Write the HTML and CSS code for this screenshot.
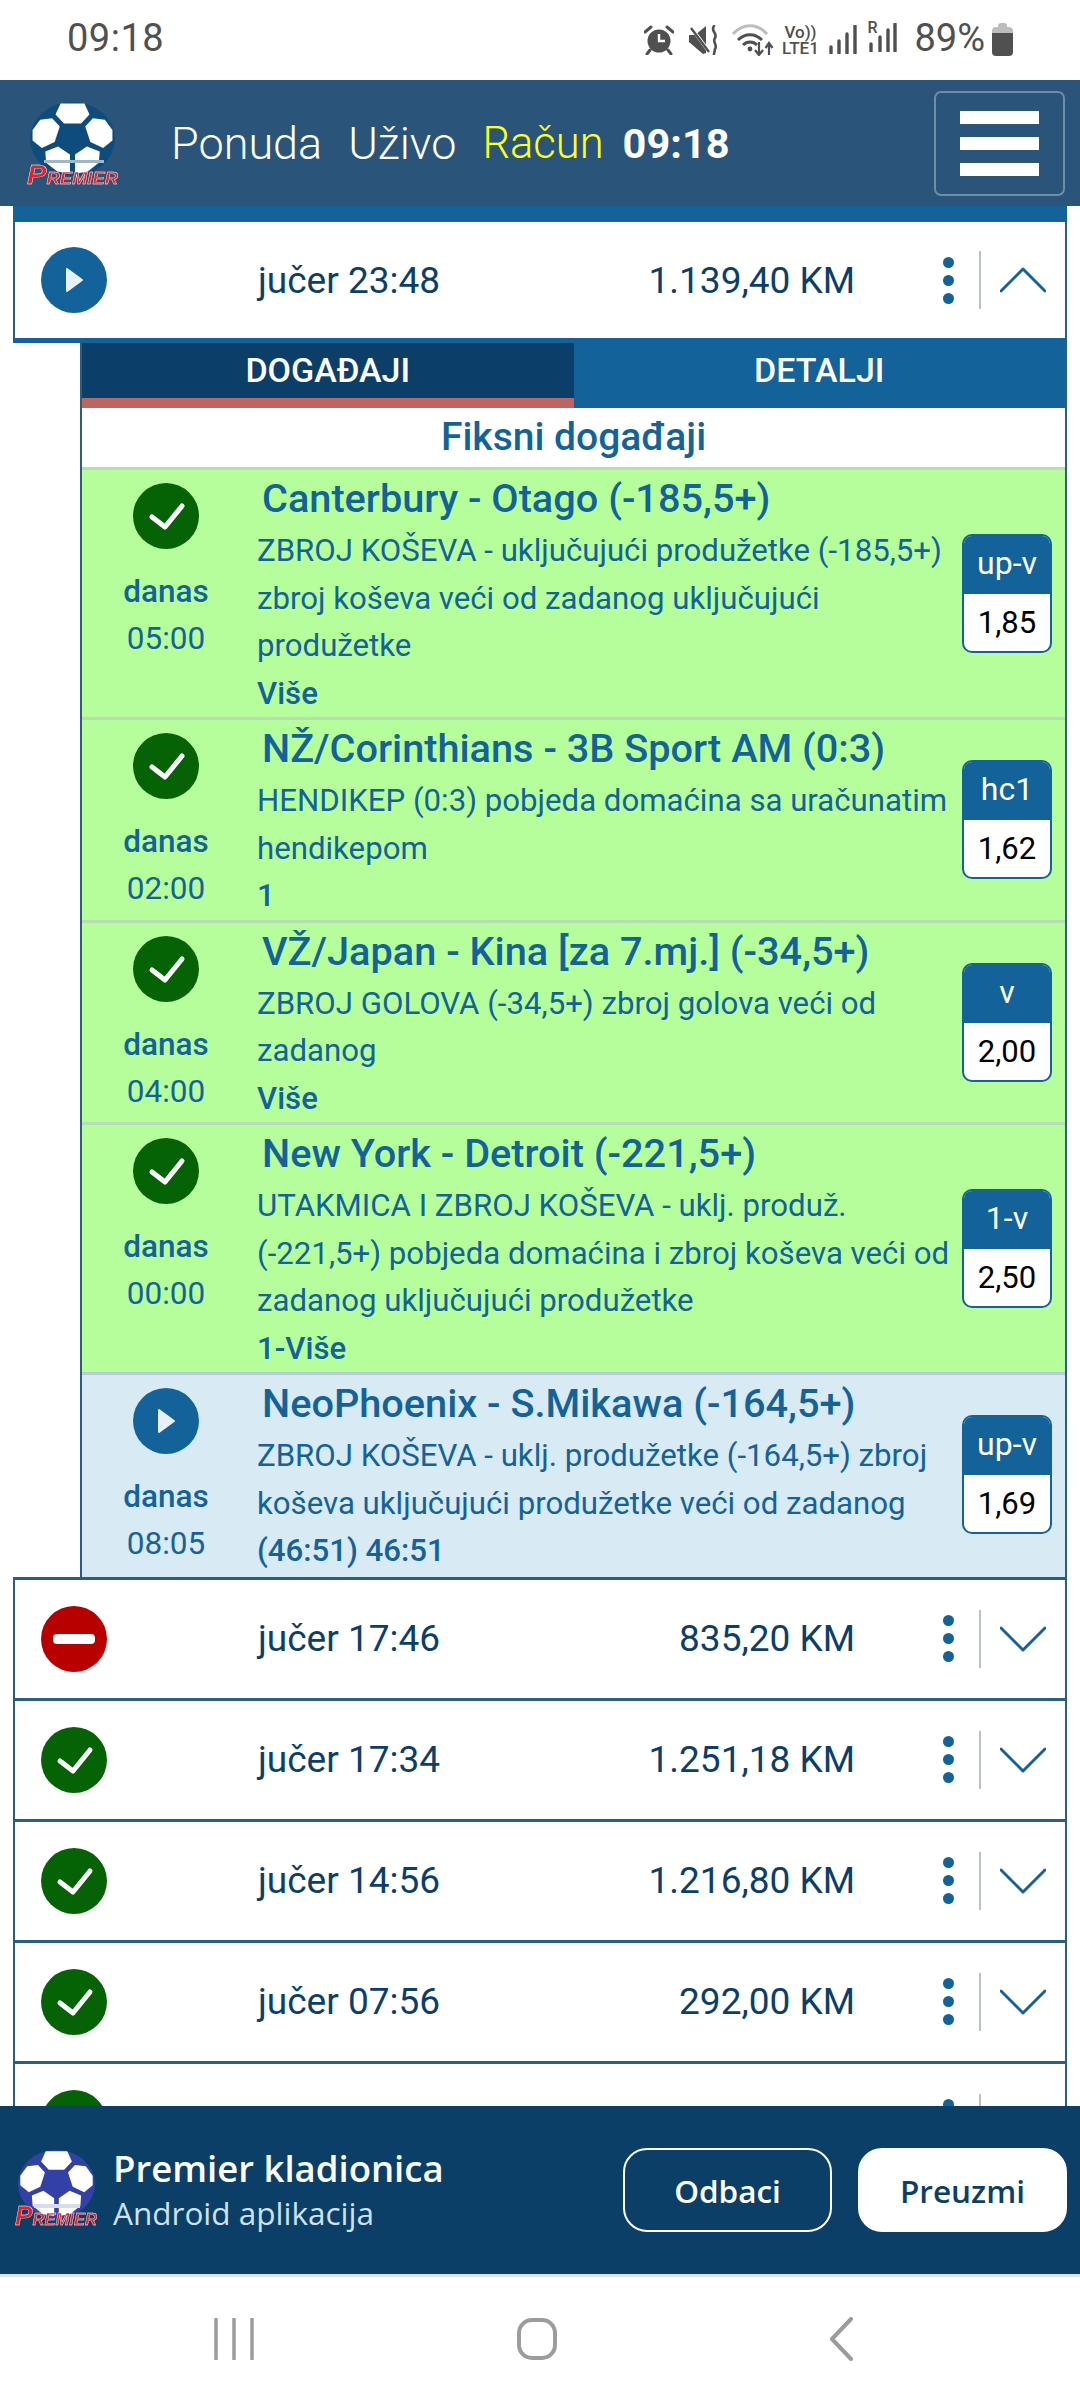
FILE: index.html
```html
<!DOCTYPE html>
<html lang="hr">
<head>
    <meta charset="UTF-8" />
    <meta name="viewport" content="width=device-width, initial-scale=1.0" />
    <title>Premier</title>
    <link rel="stylesheet" href="styles.css">
</head>

<body>
    <svg class="defs" width="0" height="0">
        <symbol id="ball" viewBox="0 0 100 100" preserveAspectRatio="none">
            <circle cx="50" cy="50" r="50" fill="currentColor" />
            <g fill="#fff">
                <polygon points="36,2 64,2 70,17 60,29 40,29 30,17" />
                <polygon points="26,22 35,33 29,54 14,62 3,52 3,38 12,24" />
                <polygon points="74,22 65,33 71,54 86,62 97,52 97,38 88,24" />
                <polygon points="33,60 47,71 47,97 32,94 19,82 18,67" />
                <polygon points="67,60 53,71 53,97 68,94 81,82 82,67" />
            </g>
        </symbol>
        <symbol id="check" viewBox="0 0 66 66">
            <circle cx="33" cy="33" r="33" fill="#056205" />
            <path d="M19 34 L32 44 L49 23" fill="none" stroke="#fff" stroke-width="5" stroke-linecap="round" stroke-linejoin="round" />
        </symbol>
        <symbol id="play" viewBox="0 0 66 66">
            <circle cx="33" cy="33" r="33" fill="#13629a" />
            <path d="M26 22 L41 33 L26 44 Z" fill="#e8f1f7" stroke="#e8f1f7" stroke-width="2" stroke-linejoin="round" />
        </symbol>
        <symbol id="stop" viewBox="0 0 66 66">
            <circle cx="33" cy="33" r="33" fill="#b90000" />
            <rect x="12" y="28" width="42" height="10" rx="4" fill="#fff" />
        </symbol>
        <symbol id="up" viewBox="0 0 46 26">
            <path d="M1 24 L23 2 L45 24" fill="none" stroke="#13629a" stroke-width="3" stroke-linecap="round" stroke-linejoin="round" />
        </symbol>
        <symbol id="down" viewBox="0 0 46 26">
            <path d="M1 2 L23 24 L45 2" fill="none" stroke="#13629a" stroke-width="3" stroke-linecap="round" stroke-linejoin="round" />
        </symbol>
    </svg>

    <div class="status-bar">
        <span class="status-time">09:18</span>
        <div class="status-icons">
            <svg class="st-alarm" width="30" height="30" viewBox="0 0 30 30">
                <circle cx="15" cy="16" r="11.5" fill="#505050" />
                <path d="M15 9 V16 H21" fill="none" stroke="#fff" stroke-width="2.4" />
                <path d="M1 7 L7 2 M29 7 L23 2 M6 25 L3 29 M24 25 L27 29" stroke="#505050" stroke-width="3" stroke-linecap="round" />
            </svg>
            <svg class="st-mute" width="31" height="30" viewBox="0 0 31 30">
                <path d="M0 10 H6 L17 1 V28 L14 29 L0 17 Z" fill="#505050" />
                <path d="M1 1 L21 28" stroke="#fff" stroke-width="3.5" />
                <path d="M2 3 L20 27" stroke="#505050" stroke-width="2.4" />
                <path d="M25 1 C21 6 29 8 26 13 C23 17 29 20 26 24 L25 29" fill="none" stroke="#505050" stroke-width="2.6" stroke-linecap="round" />
            </svg>
            <svg class="st-wifi" width="42" height="32" viewBox="0 0 42 32">
                <path d="M1 10 C11 -1 25 -1 35 10" fill="none" stroke="#bdbdbd" stroke-width="3" />
                <path d="M6 16 C13 9 23 9 30 16 M11 21 C15 17 21 17 25 21" fill="none" stroke="#505050" stroke-width="3" />
                <circle cx="18" cy="25" r="2.4" fill="#505050" />
                <path d="M27 18 V30 M23 26 L27 31 L31 26 M37 31 V20 M33.500 24 L37 19 L40.500 24" fill="none" stroke="#505050" stroke-width="2.2" />
            </svg>
            <div class="st-lte"><span>Vo))</span><span>LTE1</span></div>
            <svg class="st-signal" width="28" height="29" viewBox="0 0 28 29">
                <path d="M2 22 V28 M10 16 V28 M18 9 V28 M26 1 V28" stroke="#505050" stroke-width="3.4" stroke-linecap="round" />
            </svg>
            <div class="st-roam">
                <span class="st-r">R</span>
                <svg width="30" height="29" viewBox="0 0 30 29">
                    <path d="M4 21 V28 M13 14 V28 M21 7 V28 M28 1 V28" stroke="#505050" stroke-width="3.400" stroke-linecap="round" />
                </svg>
            </div>
            <span class="st-percent">89%</span>
            <svg class="st-battery" width="21" height="33" viewBox="0 0 21 33">
                <path d="M6 3 Q6 0 9 0 H12 Q15 0 15 3 V4 H17 Q21 4 21 8 V10 H0 V8 Q0 4 4 4 H6 Z" fill="#bdbdbd" />
                <path d="M0 10 H21 V29 Q21 33 17 33 H4 Q0 33 0 29 Z" fill="#505050" />
            </svg>
        </div>
    </div>

    <header class="top-bar">
        <svg class="logo logo-top" width="98" height="90" viewBox="0 0 98 90">
            <use href="#ball" x="6" y="4" width="85" height="74" />
            <rect x="20" y="62" width="60" height="3" fill="#9db7cc" />
            <text class="logo-text" x="3" y="86" textLength="91" lengthAdjust="spacingAndGlyphs"><tspan class="logo-big">P</tspan>REMIER</text>
        </svg>
        <nav class="top-nav">
            <a>Ponuda</a>
            <a>Uživo</a>
            <a class="active">Račun</a>
            <b>09:18</b>
        </nav>
        <div class="menu-button">
            <span></span><span></span><span></span>
        </div>
    </header>

    <main>
        <div class="ticket-strip"></div>

        <div class="ticket open">
            <svg class="state-icon"><use href="#play" /></svg>
            <span class="ticket-time">jučer 23:48</span>
            <span class="ticket-sum">1.139,40 KM</span>
            <div class="dots"><i></i><i></i><i></i></div>
            <div class="divider"></div>
            <svg class="chevron"><use href="#up" /></svg>
        </div>

        <section class="details">
            <div class="tabs">
                <div class="tab active">DOGAĐAJI</div>
                <div class="tab">DETALJI</div>
            </div>
            <h2 class="fixed-title">Fiksni događaji</h2>

            <div class="event won">
                <div class="event-when">
                    <svg class="state-icon"><use href="#check" /></svg>
                    <span class="when-day">danas</span>
                    <span>05:00</span>
                </div>
                <div class="event-body">
                    <h3>Canterbury - Otago (-185,5+)</h3>
                    <p>ZBROJ KOŠEVA - uključujući produžetke (-185,5+) zbroj koševa veći od zadanog uključujući produžetke</p>
                    <strong>Više</strong>
                </div>
                <div class="odds"><span>up-v</span><b>1,85</b></div>
            </div>

            <div class="event won">
                <div class="event-when">
                    <svg class="state-icon"><use href="#check" /></svg>
                    <span class="when-day">danas</span>
                    <span>02:00</span>
                </div>
                <div class="event-body">
                    <h3>NŽ/Corinthians - 3B Sport AM (0:3)</h3>
                    <p>HENDIKEP (0:3) pobjeda domaćina sa uračunatim hendikepom</p>
                    <strong>1</strong>
                </div>
                <div class="odds"><span>hc1</span><b>1,62</b></div>
            </div>

            <div class="event won">
                <div class="event-when">
                    <svg class="state-icon"><use href="#check" /></svg>
                    <span class="when-day">danas</span>
                    <span>04:00</span>
                </div>
                <div class="event-body">
                    <h3>VŽ/Japan - Kina [za 7.mj.] (-34,5+)</h3>
                    <p>ZBROJ GOLOVA (-34,5+) zbroj golova veći od zadanog</p>
                    <strong>Više</strong>
                </div>
                <div class="odds"><span>v</span><b>2,00</b></div>
            </div>

            <div class="event won">
                <div class="event-when">
                    <svg class="state-icon"><use href="#check" /></svg>
                    <span class="when-day">danas</span>
                    <span>00:00</span>
                </div>
                <div class="event-body">
                    <h3>New York - Detroit (-221,5+)</h3>
                    <p>UTAKMICA I ZBROJ KOŠEVA - uklj. produž. (-221,5+) pobjeda domaćina i zbroj koševa veći od zadanog uključujući produžetke</p>
                    <strong>1-Više</strong>
                </div>
                <div class="odds"><span>1-v</span><b>2,50</b></div>
            </div>

            <div class="event live">
                <div class="event-when">
                    <svg class="state-icon"><use href="#play" /></svg>
                    <span class="when-day">danas</span>
                    <span>08:05</span>
                </div>
                <div class="event-body">
                    <h3>NeoPhoenix - S.Mikawa (-164,5+)</h3>
                    <p>ZBROJ KOŠEVA - uklj. produžetke (-164,5+) zbroj koševa uključujući produžetke veći od zadanog</p>
                    <strong>(46:51) 46:51</strong>
                </div>
                <div class="odds"><span>up-v</span><b>1,69</b></div>
            </div>
        </section>

        <div class="ticket">
            <svg class="state-icon"><use href="#stop" /></svg>
            <span class="ticket-time">jučer 17:46</span>
            <span class="ticket-sum">835,20 KM</span>
            <div class="dots"><i></i><i></i><i></i></div>
            <div class="divider"></div>
            <svg class="chevron"><use href="#down" /></svg>
        </div>
        <div class="ticket">
            <svg class="state-icon"><use href="#check" /></svg>
            <span class="ticket-time">jučer 17:34</span>
            <span class="ticket-sum">1.251,18 KM</span>
            <div class="dots"><i></i><i></i><i></i></div>
            <div class="divider"></div>
            <svg class="chevron"><use href="#down" /></svg>
        </div>
        <div class="ticket">
            <svg class="state-icon"><use href="#check" /></svg>
            <span class="ticket-time">jučer 14:56</span>
            <span class="ticket-sum">1.216,80 KM</span>
            <div class="dots"><i></i><i></i><i></i></div>
            <div class="divider"></div>
            <svg class="chevron"><use href="#down" /></svg>
        </div>
        <div class="ticket">
            <svg class="state-icon"><use href="#check" /></svg>
            <span class="ticket-time">jučer 07:56</span>
            <span class="ticket-sum">292,00 KM</span>
            <div class="dots"><i></i><i></i><i></i></div>
            <div class="divider"></div>
            <svg class="chevron"><use href="#down" /></svg>
        </div>
        <div class="ticket">
            <svg class="state-icon"><use href="#check" /></svg>
            <span class="ticket-time"></span>
            <span class="ticket-sum"></span>
            <div class="dots"><i></i><i></i><i></i></div>
            <div class="divider"></div>
            <svg class="chevron"><use href="#down" /></svg>
        </div>
    </main>

    <div class="app-banner">
        <svg class="logo logo-app" width="88" height="80" viewBox="0 0 88 80">
            <use href="#ball" x="6" y="0" width="77" height="68" />
            <rect x="22" y="54" width="46" height="4" fill="#d7dcec" />
            <text class="logo-text" x="3" y="75" textLength="82" lengthAdjust="spacingAndGlyphs"><tspan class="logo-big">P</tspan>REMIER</text>
        </svg>
        <div class="app-info">
            <strong>Premier kladionica</strong>
            <span>Android aplikacija</span>
        </div>
        <div class="app-buttons">
            <button class="btn-outline">Odbaci</button>
            <button class="btn-solid">Preuzmi</button>
        </div>
    </div>

    <div class="android-nav">
        <svg width="40" height="42" viewBox="0 0 40 42">
            <path d="M2 1 V41 M20 1 V41 M38 1 V41" stroke="#9c9c9c" stroke-width="3.500" stroke-linecap="round" />
        </svg>
        <svg class="nav-home" width="40" height="42" viewBox="0 0 40 42">
            <rect x="2" y="2" width="36" height="38" rx="13" fill="none" stroke="#9c9c9c" stroke-width="4" />
        </svg>
        <svg class="nav-back" width="24" height="44" viewBox="0 0 24 44">
            <path d="M22 2 L3 22 L22 42" fill="none" stroke="#9c9c9c" stroke-width="4" stroke-linecap="round" stroke-linejoin="round" />
        </svg>
    </div>
</body>
</html>
```

FILE: styles.css
```css
body {
    margin: 0;
    width: 1080px;
    height: 2400px;
    overflow: hidden;
    display: flex;
    flex-direction: column;
    background-color: #fff;
    font-family: Roboto, sans-serif;
}

.defs {
    display: none;
}

/* --- status bar --- */
.status-bar {
    height: 80px;
    flex: none;
    display: flex;
    align-items: center;
    justify-content: space-between;
    padding: 0 67px 4px;
    box-sizing: border-box;
    color: #505050;
}

.status-time {
    font-size: 38px;
    font-weight: 400;
    letter-spacing: 0.5px;
}

.status-icons {
    display: flex;
    align-items: center;
    margin-top: 3px;
}

.st-alarm {
    margin-right: 15px;
}

.st-mute {
    margin-right: 12px;
}

.st-wifi {
    margin-right: 6px;
}

.st-lte {
    width: 40px;
    display: flex;
    flex-direction: column;
    align-items: center;
    font-size: 17px;
    font-weight: 500;
    line-height: 16px;
    margin-right: 9px;
}

.st-signal {
    margin-right: 10px;
}

.st-roam {
    position: relative;
    margin-right: 17px;
}

.st-r {
    position: absolute;
    left: 0;
    top: -3px;
    font-size: 16px;
    font-weight: 500;
    line-height: 16px;
}

.st-percent {
    font-size: 38px;
    margin-right: 7px;
    margin-top: -3px;
}

/* --- top bar --- */
.top-bar {
    height: 126px;
    flex: none;
    background-color: #2a5479;
    display: flex;
    align-items: center;
    padding: 0 15px 0 24px;
    box-sizing: border-box;
}

.logo {
    flex: none;
    overflow: visible;
    filter: blur(0.5px);
}

.logo-text {
    font-family: "Liberation Sans", sans-serif;
    font-weight: 700;
    font-style: italic;
    font-size: 17px;
    fill: #e1202c;
    stroke: #fff;
    stroke-width: 0.4px;
}

.logo-big {
    font-size: 27px;
}

.logo-top {
    color: #0f4c7e;
}

.top-nav {
    display: flex;
    align-items: center;
    margin-left: 49px;
    gap: 26px;
    font-size: 45px;
    font-weight: 300;
    color: #fff;
}

.top-nav .active {
    color: #ffff1e;
    font-size: 43.500px;
}

.top-nav b {
    margin-left: -7px;
    font-weight: 700;
    font-size: 41.500px;
}

.menu-button {
    margin-left: auto;
    width: 131px;
    height: 105px;
    box-sizing: border-box;
    border: 2px solid #6f8ca8;
    border-radius: 7px;
    display: flex;
    flex-direction: column;
    align-items: center;
    justify-content: center;
    gap: 13px;
}

.menu-button span {
    width: 79px;
    height: 13px;
    background-color: #fff;
}

/* --- ticket list --- */
main {
    flex: 1;
    min-height: 0;
    overflow: hidden;
    padding: 0 13px;
}

.ticket-strip {
    height: 16px;
    background-color: #13629a;
}

.ticket {
    height: 121px;
    box-sizing: border-box;
    display: flex;
    align-items: center;
    background-color: #fff;
    border: 2px solid #2a5f85;
    border-top: none;
    border-bottom-width: 3px;
    color: #0b3f69;
    font-size: 37px;
    padding-right: 19px;
}

.ticket.open {
    border-bottom-color: #13629a;
    border-bottom-width: 5px;
}

.details + .ticket {
    height: 124px;
    border-top: 3px solid #2a5f85;
}

.state-icon {
    width: 66px;
    height: 66px;
    flex: none;
}

.ticket .state-icon {
    margin-left: 26px;
}

.ticket-time {
    margin-left: 151px;
}

.ticket-sum {
    flex: 1;
    text-align: right;
}

.dots {
    margin-left: 88px;
    width: 12px;
    display: flex;
    flex-direction: column;
    gap: 7px;
}

.dots i {
    width: 11px;
    height: 11px;
    border-radius: 50%;
    background-color: #13629a;
}

.divider {
    width: 2px;
    height: 58px;
    margin-left: 24px;
    background-color: #b8c2cc;
}

.chevron {
    width: 46px;
    height: 26px;
    margin-left: 19px;
    flex: none;
}

/* --- expanded ticket --- */
.details {
    margin-left: 67px;
    border-left: 2px solid #2a5f85;
    border-right: 2px solid #2a5f85;
}

.tabs {
    display: grid;
    grid-template-columns: 1fr 1fr;
}

.tab {
    height: 65px;
    box-sizing: border-box;
    background-color: #13629a;
    color: #fff;
    font-size: 34px;
    font-weight: 500;
    text-align: center;
    line-height: 55px;
}

.tab.active {
    background-color: #0b3f69;
    border-bottom: 10px solid #bf6461;
}

.fixed-title {
    margin: 0;
    height: 59px;
    background-color: #fff;
    color: #13629a;
    font-size: 39px;
    font-weight: 500;
    text-align: center;
    line-height: 58px;
}

.event {
    display: flex;
    align-items: stretch;
    box-sizing: border-box;
    border-top: 3px solid #b9dcb8;
    color: #13629a;
}

.event.won {
    background-color: #b6fe9c;
}

.event.live {
    background-color: #d8eaf4;
    border-top-color: #b8ccd8;
    padding-bottom: 2px;
}

.event-when {
    width: 168px;
    flex: none;
    display: flex;
    flex-direction: column;
    align-items: center;
    font-size: 31.500px;
    line-height: 47px;
    padding-top: 13px;
    box-sizing: border-box;
    font-weight: 500;
}

.event-when span:last-child {
    font-weight: 400;
}

.when-day {
    margin-top: 19px;
}

.event-body {
    flex: 1;
    min-width: 0;
    margin-left: 7px;
    padding-top: 5px;
    font-size: 31.200px;
    line-height: 47.500px;
}

.event-body h3 {
    margin: 0 0 4px 5px;
    font-size: 39.700px;
    font-weight: 500;
    line-height: 48px;
}

.event-body p {
    margin: 0;
}

.event-body strong {
    font-weight: 500;
    display: block;
}

.odds {
    align-self: center;
    width: 90px;
    height: 119px;
    margin: 0 13px 0 10px;
    flex: none;
    display: flex;
    flex-direction: column;
    box-sizing: border-box;
    border: 2px solid #13629a;
    border-radius: 10px;
    overflow: hidden;
    text-align: center;
    font-size: 32px;
    background-color: #fff;
}

.odds span {
    height: 58px;
    flex: none;
    background-color: #13629a;
    color: #fff;
    line-height: 54px;
}

.odds b {
    font-weight: 400;
    font-size: 31px;
    color: #000;
    line-height: 58px;
}

/* --- app banner --- */
.app-banner {
    height: 171px;
    flex: none;
    box-sizing: border-box;
    background-color: #0b3f68;
    border-bottom: 3px solid #dfe5ea;
    display: flex;
    align-items: center;
    padding: 0 13px 0 12px;
    font-family: "Open Sans", sans-serif;
}

.logo-app {
    color: #3340a8;
}

.app-info {
    display: flex;
    flex-direction: column;
    margin-left: 13px;
    color: #fff;
}

.app-info strong {
    font-size: 36.500px;
    font-weight: 600;
    line-height: 46px;
}

.app-info span {
    font-size: 31.500px;
    line-height: 44px;
    color: #cfe2f0;
}

.app-buttons {
    margin-left: auto;
    display: flex;
    gap: 26px;
}

.app-buttons button {
    width: 209px;
    height: 84px;
    border-radius: 24px;
    font-family: inherit;
    font-size: 31.500px;
    font-weight: 600;
    padding: 0;
}

.btn-outline {
    background-color: transparent;
    border: 2px solid #fff;
    color: #fff;
}

.btn-solid {
    background-color: #fff;
    border: 2px solid #fff;
    color: #0b3f68;
}

/* --- android nav --- */
.android-nav {
    height: 123px;
    flex: none;
    display: flex;
    align-items: center;
    padding-left: 214px;
}

.nav-home {
    margin-left: 263px;
}

.nav-back {
    margin-left: 272px;
}
```
